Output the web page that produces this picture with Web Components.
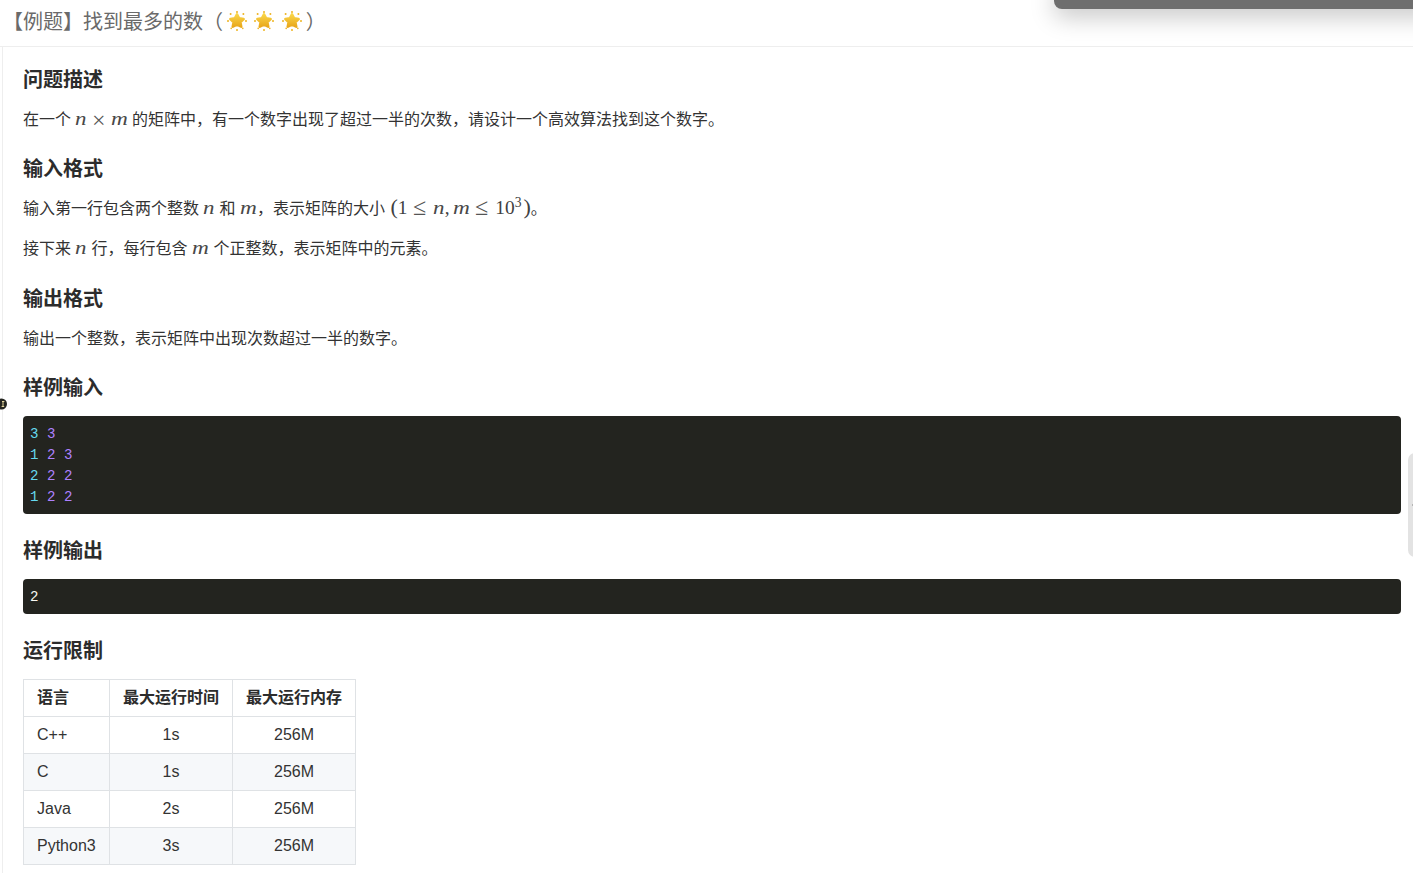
<!DOCTYPE html>
<html lang="zh">
<head>
<meta charset="utf-8">
<title>找到最多的数</title>
<style>
  html, body { margin: 0; padding: 0; height: 100%; overflow: hidden; background: #fff; }
  body { font-family: "Liberation Sans", "Noto Sans CJK SC", sans-serif; font-size: 16px; color: #333; }
</style>
</head>
<body>
<problem-page>
  <page-header>【例题】找到最多的数（<star-icon></star-icon><star-icon></star-icon><star-icon></star-icon>）</page-header>
  <problem-body>
    <prob-heading first>问题描述</prob-heading>
    <prob-para>在一个 <math-i w="11.6" sx="1.18">n</math-i><math-op big low l="5" r="5">×</math-op><math-i w="17" sx="1.2">m</math-i> 的矩阵中，有一个数字出现了超过一半的次数，请设计一个高效算法找到这个数字。</prob-para>
    <prob-heading>输入格式</prob-heading>
    <prob-para>输入第一行包含两个整数 <math-i w="11.6" sx="1.18">n</math-i> 和 <math-i w="17" sx="1.2">m</math-i>，表示矩阵的大小 <math-op paren l="1">(</math-op><math-op>1</math-op><math-op big l="5.5" r="7">≤</math-op><math-i w="11.6" sx="1.18">n</math-i><math-op r="3">,</math-op><math-i w="17" sx="1.2">m</math-i><math-op big l="5.5" r="7">≤</math-op><math-op>10<sup>3</sup></math-op><math-op paren l="2">)</math-op>。</prob-para>
    <prob-para>接下来 <math-i w="11.6" sx="1.18">n</math-i> 行，每行包含 <math-i w="17" sx="1.2">m</math-i> 个正整数，表示矩阵中的元素。</prob-para>
    <prob-heading>输出格式</prob-heading>
    <prob-para>输出一个整数，表示矩阵中出现次数超过一半的数字。</prob-para>
    <prob-heading>样例输入</prob-heading>
    <code-block lines="3 3|1 2 3|2 2 2|1 2 2" colored></code-block>
    <prob-heading tight>样例输出</prob-heading>
    <code-block lines="2"></code-block>
    <prob-heading>运行限制</prob-heading>
    <limit-table></limit-table>
  </problem-body>
  <float-bar></float-bar>
  <side-dot></side-dot>
  <side-handle></side-handle>
</problem-page>

<script>
function shadow(el, html) {
  el.attachShadow({ mode: 'open' });
  el.shadowRoot.innerHTML = html;
}

class ProblemPage extends HTMLElement {
  connectedCallback() {
    shadow(this, `
      <style>
        :host { display: flex; flex-direction: column; position: relative; width: 1413px; height: 873px; overflow: hidden; background: #fff; }
      </style>
      <slot></slot>`);
  }
}

class PageHeader extends HTMLElement {
  connectedCallback() {
    shadow(this, `
      <style>
        :host { display: flex; align-items: center; height: 41px; padding: 0 0 5px 3px; border-bottom: 1px solid #eeeeee;
          font-size: 20px; color: #6a6a6a; white-space: nowrap; flex: none; }
      </style>
      <slot></slot>`);
  }
}

class StarIcon extends HTMLElement {
  connectedCallback() {
    shadow(this, `
      <style>
        :host { display: inline-block; width: 20px; height: 20px; margin: 0 3.8px; flex: none; }
        svg { display: block; }
      </style>
      <svg width="20" height="20" viewBox="0 0 20 20">
        <defs><linearGradient id="g" x1="0" y1="0" x2="0" y2="1">
          <stop offset="0" stop-color="#f9d548"/><stop offset="1" stop-color="#e9a81c"/>
        </linearGradient></defs>
        <path d="M10 3.4 12.1 7.3 16.6 8 13.4 11.2 14.2 15.7 10 13.7 5.8 15.7 6.6 11.2 3.4 8 7.9 7.3Z"
          fill="url(#g)" stroke="url(#g)" stroke-width="2.6" stroke-linejoin="round"/>
        <g fill="#eeb421">
          <circle cx="10" cy="1" r="1"/><circle cx="3.6" cy="3" r="1"/><circle cx="16.4" cy="3" r="1"/>
          <circle cx="1" cy="10" r="1"/><circle cx="19" cy="10" r="1"/>
          <circle cx="4.2" cy="17.4" r=".8"/><circle cx="15.8" cy="17.4" r=".8"/><circle cx="10" cy="19" r="1"/>
        </g>
      </svg>`);
  }
}

class ProblemBody extends HTMLElement {
  connectedCallback() {
    shadow(this, `
      <style>
        :host { display: block; flex: 1; margin-left: 2px; padding: 19px 12px 0 20px; border-left: 1px solid #eeeeee; }
      </style>
      <slot></slot>`);
  }
}

class ProbHeading extends HTMLElement {
  connectedCallback() {
    shadow(this, `
      <style>
        :host { display: block; font-size: 20px; font-weight: 700; line-height: 28px; color: #2c2c2c; margin: 23.4px 0 14px; }
        :host([first]) { margin-top: 0; }
        :host([tight]) { margin-top: 22.4px; }
      </style>
      <slot></slot>`);
  }
}

class ProbPara extends HTMLElement {
  connectedCallback() {
    shadow(this, `
      <style>
        :host { display: block; font-size: 16px; line-height: 24px; color: #333; margin: 0 0 16px; white-space: nowrap; }
        :host(:last-of-type) { margin-bottom: 0; }
      </style>
      <slot></slot>`);
  }
}

// glyph is stretched sideways because the serif italic is narrower than the math face
class MathI extends HTMLElement {
  connectedCallback() {
    const w = this.getAttribute('w');
    const sx = this.getAttribute('sx');
    shadow(this, `
      <style>
        :host { display: inline-block; width: ${w}px; font-family: "Liberation Serif", serif; font-style: italic; font-size: 19.4px; line-height: 0; color: #484848; }
        span { display: inline-block; transform: scaleX(${sx}); transform-origin: 0 50%; }
      </style>
      <span><slot></slot></span>`);
  }
}

class MathOp extends HTMLElement {
  connectedCallback() {
    const l = this.getAttribute('l') || 0;
    const r = this.getAttribute('r') || 0;
    shadow(this, `
      <style>
        :host { display: inline-block; margin: 0 ${r}px 0 ${l}px; font-family: "Liberation Serif", serif; font-size: 19.4px; line-height: 0; color: #404040; }
        :host([big]) { font-size: 24px; color: #555; vertical-align: -1px; }
        :host([low]) { vertical-align: -3px; }
        :host([paren]) { font-size: 22px; }
        ::slotted(sup) { font-size: 13.6px; line-height: 0; vertical-align: 7px; }
      </style>
      <slot></slot>`);
  }
}

class CodeBlock extends HTMLElement {
  connectedCallback() {
    const colored = this.hasAttribute('colored');
    const rows = this.getAttribute('lines').split('|').map(line => {
      const cells = line.split(' ').map((c, i) =>
        `<span class="${colored ? (i === 0 ? 'cy' : 'pu') : 'pl'}">${c}</span>`);
      return `<div>${cells.join(' ')}</div>`;
    }).join('');
    shadow(this, `
      <style>
        :host { display: block; background: #23241f; border-radius: 4px; padding: 8px 7px 6px; }
        div { font-family: "Liberation Mono", monospace; font-size: 14.1px; line-height: 21px; height: 21px; white-space: pre; }
        .cy { color: #66d9ef; }
        .pu { color: #ae81ff; }
        .pl { color: #f8f8f2; }
      </style>
      ${rows}`);
  }
}

class LimitTable extends HTMLElement {
  connectedCallback() {
    const data = [
      ['C++', '1s', '256M'],
      ['C', '1s', '256M'],
      ['Java', '2s', '256M'],
      ['Python3', '3s', '256M'],
    ];
    shadow(this, `
      <style>
        :host { display: block; }
        table { border-collapse: collapse; font-size: 16px; color: #333; }
        th, td { border: 1px solid #dfe2e5; padding: 0 13px; box-sizing: border-box; text-align: center; line-height: 24px; height: 37px; white-space: nowrap; }
        th { font-weight: 700; color: #2c2c2c; }
        th:first-child, td:first-child { text-align: left; }
        tbody tr:nth-child(even) { background: #f6f8fa; }
        .c1 { width: 86px; } .c2 { width: 123px; } .c3 { width: 123px; }
      </style>
      <table>
        <thead><tr><th class="c1">语言</th><th class="c2">最大运行时间</th><th class="c3">最大运行内存</th></tr></thead>
        <tbody>${data.map(r => `<tr>${r.map(c => `<td>${c}</td>`).join('')}</tr>`).join('')}</tbody>
      </table>`);
  }
}

class FloatBar extends HTMLElement {
  connectedCallback() {
    shadow(this, `
      <style>
        :host { position: absolute; top: -20px; left: 1054px; width: 400px; height: 28.5px; background: #6e6e6e;
          border-radius: 8px; box-shadow: 0 8px 24px rgba(0,0,0,.22); }
      </style>`);
  }
}

class SideDot extends HTMLElement {
  connectedCallback() {
    shadow(this, `
      <style>
        :host { position: absolute; left: -4px; top: 398px; width: 11px; height: 12px; }
        svg { display: block; }
      </style>
      <svg width="11" height="12" viewBox="0 0 11 12">
        <circle cx="5.5" cy="6" r="5.5" fill="#23241f"/>
        <path d="M6 3.5h2.4M7 3.5v5M5.6 8.5h2.6" stroke="#e8d9a0" stroke-width="1" fill="none"/>
      </svg>`);
  }
}

class SideHandle extends HTMLElement {
  connectedCallback() {
    shadow(this, `
      <style>
        :host { position: absolute; left: 1408px; top: 453px; width: 14px; height: 104px; background: #e3e3e3; border-radius: 8px; }
        :host::after { content: ""; position: absolute; left: 4px; top: 51px; width: 1px; height: 2px; background: #b5b5b5; }
      </style>`);
  }
}

customElements.define('problem-page', ProblemPage);
customElements.define('page-header', PageHeader);
customElements.define('star-icon', StarIcon);
customElements.define('problem-body', ProblemBody);
customElements.define('prob-heading', ProbHeading);
customElements.define('prob-para', ProbPara);
customElements.define('math-i', MathI);
customElements.define('math-op', MathOp);
customElements.define('code-block', CodeBlock);
customElements.define('limit-table', LimitTable);
customElements.define('float-bar', FloatBar);
customElements.define('side-dot', SideDot);
customElements.define('side-handle', SideHandle);
</script>
</body>
</html>
